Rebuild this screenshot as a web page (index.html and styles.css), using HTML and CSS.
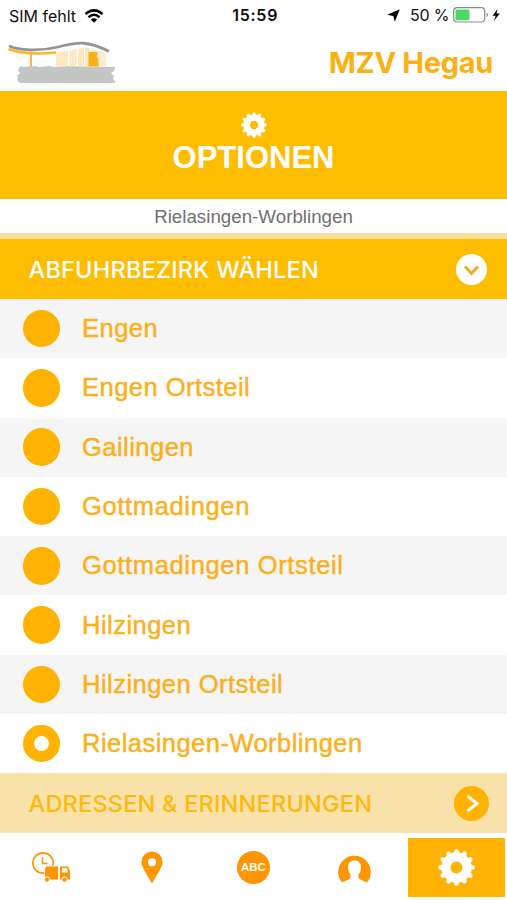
FILE: index.html
```html
<!DOCTYPE html>
<html lang="de">
<head>
    <meta charset="UTF-8">
    <title>MZV Hegau</title>
    <link rel="stylesheet" href="styles.css">
</head>
<body>

<svg class="defs" width="0" height="0">
    <symbol id="gear" viewBox="0 0 36 36">
        <circle cx="18" cy="18" r="10.300" fill="none" stroke="currentColor" stroke-width="9"/>
        <g stroke="currentColor" stroke-width="4.600" stroke-linecap="round">
            <path d="M18 2.500v5M18 28.500v5M2.500 18h5M28.500 18h5"/>
            <path d="M18 2.500v5M18 28.500v5M2.500 18h5M28.500 18h5" transform="rotate(30 18 18)"/>
            <path d="M18 2.500v5M18 28.500v5M2.500 18h5M28.500 18h5" transform="rotate(60 18 18)"/>
        </g>
    </symbol>
</svg>

<div class="status">
    <span class="carrier">SIM fehlt</span>
    <svg class="wifi" width="20" height="14" viewBox="0 0 19 14">
        <g fill="none" stroke="#000" stroke-width="2.500">
            <path d="M1 5Q9.500-2.200 18 5"/>
            <path d="M4 8.200Q9.500 3.400 15 8.200"/>
        </g>
        <path d="M6.300 10.500Q9.500 8 12.700 10.500L9.500 13.700z"/>
    </svg>
    <span class="time">15:59</span>
    <svg class="arrow" width="13" height="13" viewBox="0 0 13 13"><path d="M12.800.200L7.800 12.800 6.300 7 .2 5.800z"/></svg>
    <span class="percent">50 %</span>
    <svg class="battery" width="48" height="16" viewBox="0 0 48 16">
        <rect x=".7" y=".7" width="31" height="14.300" rx="3.500" fill="#fff" stroke="#8b8b8b" stroke-width="1.200"/>
        <rect x="2.500" y="2.500" width="14" height="10.700" rx="1.500" fill="#4cd964"/>
        <path d="M33.500 5.500q3 2.300 0 4.600z" fill="#8b8b8b"/>
        <path d="M44.500 2L39.500 8.800h3.200L40.800 14l6-7.400h-3.200z"/>
    </svg>
</div>

<header>
    <svg class="logo" width="110" height="44" viewBox="0 0 110 44">
        <path d="M12 25l3 1 12-1 4 1 9-1 7 1 12-1 48 1-1 4-3 2 3 3-1 3 3 4H12l-3-3 1-3-1-2 3-1-2-4z" fill="#c4c6c6"/>
        <path d="M48 11.500l12-2v16H48z" fill="#fde8c4"/>
        <path d="M61.500 10l7-2.500v18h-7z" fill="#fde8c4"/>
        <path d="M70 8l6-1v18.500h-6zM77 6.500l5 .5v18.500h-5z" fill="#fde8c4"/>
        <path d="M83 7l15 5v13.500H83z" fill="#fdeccf"/>
        <path d="M80.500 11h9l-.5 5 1.500 2-.5 3 1 4.500H80.500z" fill="#fcb116"/>
        <path d="M.5 8Q18 14.500 48 11.500" fill="none" stroke="#fcb42a" stroke-width="2.600"/>
        <path d="M23 12v14" stroke="#fcb42a" stroke-width="1.800"/>
        <path d="M1 5C11 9.500 32 10.500 50 6 70 1 80-.5 101 10.500" fill="none" stroke="#949494" stroke-width="2.800"/>
    </svg>
    <span class="brand">MZV Hegau</span>
</header>

<div class="hero">
    <svg class="hero-gear" width="26" height="26"><use href="#gear"/></svg>
    <h1>OPTIONEN</h1>
</div>
<div class="district">Rielasingen-Worblingen</div>

<div class="section open">
    <span class="section-title">ABFUHRBEZIRK WÄHLEN</span>
    <svg width="31" height="31" viewBox="0 0 31 31">
        <circle cx="15.500" cy="15.500" r="15.500" fill="#fff"/>
        <path d="M9 12.500l6.500 7 6.500-7" fill="none" stroke="#f5a912" stroke-width="2.800"/>
    </svg>
</div>

<div class="list">
    <div class="row"><span class="radio"></span>Engen</div>
    <div class="row"><span class="radio"></span>Engen Ortsteil</div>
    <div class="row"><span class="radio"></span>Gailingen</div>
    <div class="row"><span class="radio"></span><span class="wide">Gottmadingen</span></div>
    <div class="row"><span class="radio"></span><span class="wide">Gottmadingen Ortsteil</span></div>
    <div class="row"><span class="radio"></span>Hilzingen</div>
    <div class="row"><span class="radio"></span>Hilzingen Ortsteil</div>
    <div class="row"><span class="radio checked"></span>Rielasingen-Worblingen</div>
</div>

<div class="section closed">
    <span class="section-title">ADRESSEN &amp; ERINNERUNGEN</span>
    <svg width="35" height="35" viewBox="0 0 35 35">
        <circle cx="17.500" cy="17.500" r="17.500" fill="#ffb200"/>
        <path d="M13.500 10l9.500 7.500-9.500 7.500" fill="none" stroke="#fff" stroke-width="3"/>
    </svg>
</div>

<nav>
    <div class="tab">
        <svg width="38" height="32" viewBox="0 0 38 32">
            <circle cx="11" cy="12" r="10.200" fill="#fff" stroke="#ff9500" stroke-width="1.700"/>
            <path d="M10.500 6v6.500h5" fill="none" stroke="#ff9500" stroke-width="1.500"/>
            <path d="M14.500 15h12v14h-14V18zM27.500 15h9l2 6v8h-11z" fill="#ff9500" stroke="#fff" stroke-width=".8"/>
            <path d="M30 17h5l1 4.500h-6z" fill="#fff"/>
            <circle cx="15" cy="28.500" r="2.700" fill="#ff9500" stroke="#fff"/>
            <circle cx="32.500" cy="28.500" r="2.700" fill="#ff9500" stroke="#fff"/>
        </svg>
    </div>
    <div class="tab">
        <svg width="22" height="33" viewBox="0 0 22 33">
            <path fill-rule="evenodd" fill="#ff9500" d="M11 .5a10.500 10.500 0 0 1 10.500 10.500c0 5-5 12-10.500 21.500C5.500 23 .5 16 .5 11A10.500 10.500 0 0 1 11 .5zM11 7.200a4 4 0 1 0 0 8 4 4 0 0 0 0-8z"/>
        </svg>
    </div>
    <div class="tab"><span class="abc">ABC</span></div>
    <div class="tab">
        <svg class="person" width="33" height="28" viewBox="0 0 33 28">
            <path fill="#ff9500" d="M4 27.500A16.300 16.300 0 1 1 29 27.500C25 25.500 21 24.500 20.500 22.500v-3c1.700-2 2.500-4.500 2.500-7.500 0-4-2.500-6.500-6.500-6.500S10 8 10 12c0 3 .8 5.500 2.500 7.500v3C12 24.500 8 25.500 4 27.500z"/>
        </svg>
    </div>
    <div class="tab active">
        <svg width="37" height="37"><use href="#gear"/></svg>
    </div>
</nav>

</body>
</html>
```

FILE: styles.css
```css
* {
    box-sizing: border-box;
}
body {
    margin: 0;
    width: 507px;
    height: 900px;
    overflow: hidden;
    background: #fff;
    font-family: "Liberation Sans", Arial, sans-serif;
    display: flex;
    flex-direction: column;
}
svg {
    display: block;
    flex: none;
}
.defs {
    position: absolute;
}
.status {
    height: 30px;
    padding: 0 6px 0 9px;
    display: flex;
    align-items: center;
    font-family: Inter, sans-serif;
    font-size: 16px;
    color: #111;
    white-space: nowrap;
}
.carrier {
    width: 76px;
    padding-top: 2px;
}
.wifi {
    margin-top: 2px;
}
.time {
    margin-left: 128px;
    width: 156px;
    font-weight: 600;
    letter-spacing: 0.7px;
}
.percent {
    margin: 0 6px 0 10px;
    width: 37px;
    letter-spacing: -0.2px;
}
header {
    height: 61px;
    padding: 0 14px 0 8px;
    display: flex;
    justify-content: space-between;
}
.logo {
    margin-top: 11px;
}
.brand {
    font: bold 29px/66px Inter, sans-serif;
    letter-spacing: -0.3px;
    color: #fdb013;
    white-space: nowrap;
}
.hero {
    height: 107.5px;
    padding-top: 21px;
    background: #ffbd00;
    color: #fff;
    display: flex;
    flex-direction: column;
    align-items: center;
}
h1 {
    margin: 0;
    font-size: 31px;
    line-height: 39px;
}
.district {
    height: 34.5px;
    line-height: 36px;
    text-align: center;
    font-size: 18.75px;
    color: #707070;
}
.section {
    display: flex;
    align-items: center;
    justify-content: space-between;
    font: 500 23.5px Inter, sans-serif;
    letter-spacing: 0.22px;
    white-space: nowrap;
}
.open {
    height: 66px;
    padding: 0 20px 0 28.5px;
    border-top: 6.5px solid #fbdf9f;
    background: #ffbd00;
    color: #fff;
}
.closed {
    height: 59.5px;
    padding: 0 18px 0 28.5px;
    background: #f9e1aa;
    color: #ffb90c;
}
.row {
    height: 59.3px;
    padding-left: 22.5px;
    display: flex;
    align-items: center;
    gap: 22px;
    font-size: 25.5px;
    line-height: 31px;
    letter-spacing: 0.47px;
    color: #fbb01c;
    -webkit-text-stroke: 0.45px #fbb01c;
}
.row:nth-child(odd) {
    background: #f5f5f5;
}
.wide {
    letter-spacing: 0.65px;
}
.radio {
    width: 37.5px;
    height: 37.5px;
    border-radius: 50%;
    background: #ffb200;
}
.checked {
    border: 11px solid #ffb200;
    background: #fff;
}
nav {
    flex: 1;
    padding: 5px 2.5px 3px 0;
    display: flex;
}
.tab {
    flex: 0 0 101.4px;
    display: flex;
    align-items: center;
    justify-content: center;
}
.person {
    margin-top: 4px;
}
.abc {
    width: 33px;
    height: 33px;
    border-radius: 50%;
    background: #ff9500;
    color: #fff;
    font: bold 11.5px/33px "Liberation Sans", sans-serif;
    text-align: center;
}
.active {
    flex: 0 0 96.5px;
    margin-left: auto;
    background: #ffb200;
    color: #fff;
}
```
